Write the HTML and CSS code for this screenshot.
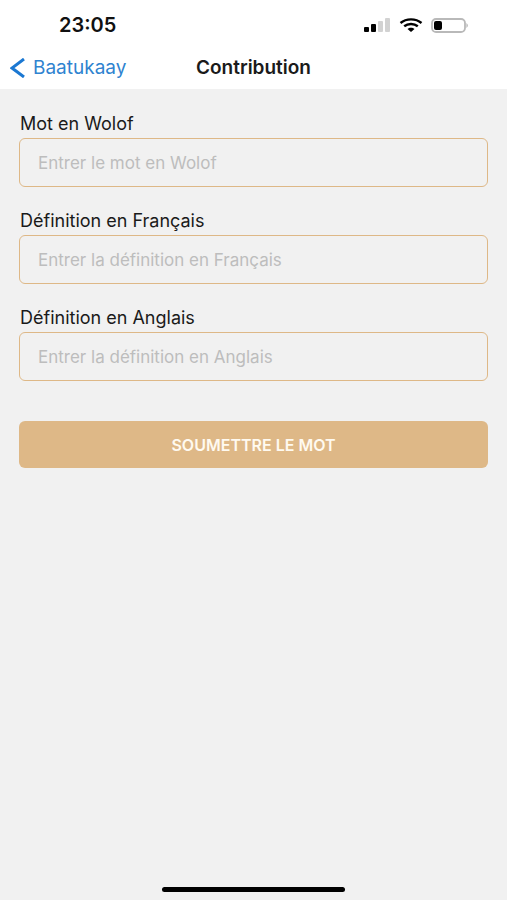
FILE: index.html
```html
<!DOCTYPE html>
<html lang="fr">
<head>
    <meta charset="UTF-8">
    <meta name="viewport" content="width=device-width, initial-scale=1.0">
    <title>Contribution</title>
    <link rel="stylesheet" href="styles.css">
</head>
<body>
    <header class="header">
        <div class="status-bar">
            <span class="time">23:05</span>
            <div class="status-icons">
                <svg width="27" height="14" viewBox="0 0 27 14">
                    <rect x="0" y="9" width="5" height="5" rx="1" fill="#000"/>
                    <rect x="7" y="6" width="5" height="8" rx="1" fill="#000"/>
                    <rect x="14" y="3" width="5" height="11" rx="1" fill="#d2d2d2"/>
                    <rect x="21" y="0" width="5" height="14" rx="1" fill="#d2d2d2"/>
                </svg>
                <svg width="24" height="14" viewBox="0 0 24 14" fill="none" stroke="#000" stroke-width="2.4">
                    <path d="M1.5 5C7.3 .1 16.7 .1 22.5 5"/>
                    <path d="M5.2 8.3C9 5.2 15 5.2 18.8 8.3"/>
                    <path d="M8.5 11C10.3 9.4 13.7 9.4 15.5 11L12 14Z" fill="#000" stroke="none"/>
                </svg>
                <svg width="38" height="15" viewBox="0 0 38 15">
                    <rect x="1" y="1" width="33" height="13" rx="4" fill="none" stroke="#b9b9b9" stroke-width="1.8"/>
                    <rect x="3" y="3" width="8" height="9" rx="2" fill="#000"/>
                    <path d="M35.5 5Q38 7.5 35.5 10Z" fill="#a8a8a8"/>
                </svg>
            </div>
        </div>
        <nav class="nav-bar">
            <a class="back" href="#">
                <svg width="15" height="20" viewBox="0 0 15 20" fill="none" stroke="#1b78d2" stroke-width="3">
                    <path d="M14 1L2 10L14 19"/>
                </svg>
                Baatukaay
            </a>
            <h1>Contribution</h1>
        </nav>
    </header>

    <main>
        <form class="form">
            <div class="field">
                <label for="wolof">Mot en Wolof</label>
                <input type="text" id="wolof" placeholder="Entrer le mot en Wolof">
            </div>
            <div class="field">
                <label for="francais">Définition en Français</label>
                <input type="text" id="francais" placeholder="Entrer la définition en Français">
            </div>
            <div class="field">
                <label for="anglais">Définition en Anglais</label>
                <input type="text" id="anglais" placeholder="Entrer la définition en Anglais">
            </div>
            <button class="submit-button" type="button">SOUMETTRE LE MOT</button>
        </form>
    </main>

    <div class="home-indicator"></div>
</body>
</html>
```
FILE: styles.css
```css
* {
    margin: 0;
    padding: 0;
    box-sizing: border-box;
}

body {
    font-family: Inter, "Liberation Sans", sans-serif;
    background: #f1f1f1;
    color: #1a1a1a;
    min-height: 100vh;
    display: flex;
    flex-direction: column;
}

.header {
    background: #fff;
}

.status-bar {
    display: flex;
    align-items: center;
    justify-content: space-between;
    height: 50px;
    padding: 0 38px 0 59px;
}

.time {
    font-size: 20px;
    font-weight: 600;
    color: #111;
}

.status-icons {
    display: flex;
    align-items: center;
    gap: 8px;
}

.nav-bar {
    display: grid;
    grid-template-columns: 1fr auto 1fr;
    align-items: center;
    height: 39px;
    padding: 0 10px 3px;
}

.back {
    display: flex;
    align-items: center;
    gap: 8px;
    font-size: 19px;
    line-height: 24px;
    color: #2f83d0;
    text-decoration: none;
}

h1 {
    font-size: 19px;
    line-height: 24px;
    font-weight: 600;
}

main {
    flex: 1;
    padding: 23px 19px;
}

.form {
    display: flex;
    flex-direction: column;
    gap: 22px;
}

.field {
    display: flex;
    flex-direction: column;
    gap: 2px;
}

.field label {
    padding-left: 1px;
    font-size: 18px;
    line-height: 24px;
}

.field input {
    width: 100%;
    height: 49px;
    padding: 0 18px;
    border: 1px solid #deb887;
    border-radius: 6px;
    background: transparent;
    font-family: inherit;
    font-size: 17px;
}

.field input::placeholder {
    color: #bdbdbd;
}

.submit-button {
    height: 47px;
    margin-top: 18px;
    border: none;
    border-radius: 6px;
    background: #deb887;
    color: #fffaf0;
    font-family: inherit;
    font-size: 16px;
    font-weight: 600;
    cursor: pointer;
}

.home-indicator {
    align-self: center;
    width: 36%;
    height: 5px;
    margin-bottom: 8px;
    border-radius: 3px;
    background: #000;
}
```
